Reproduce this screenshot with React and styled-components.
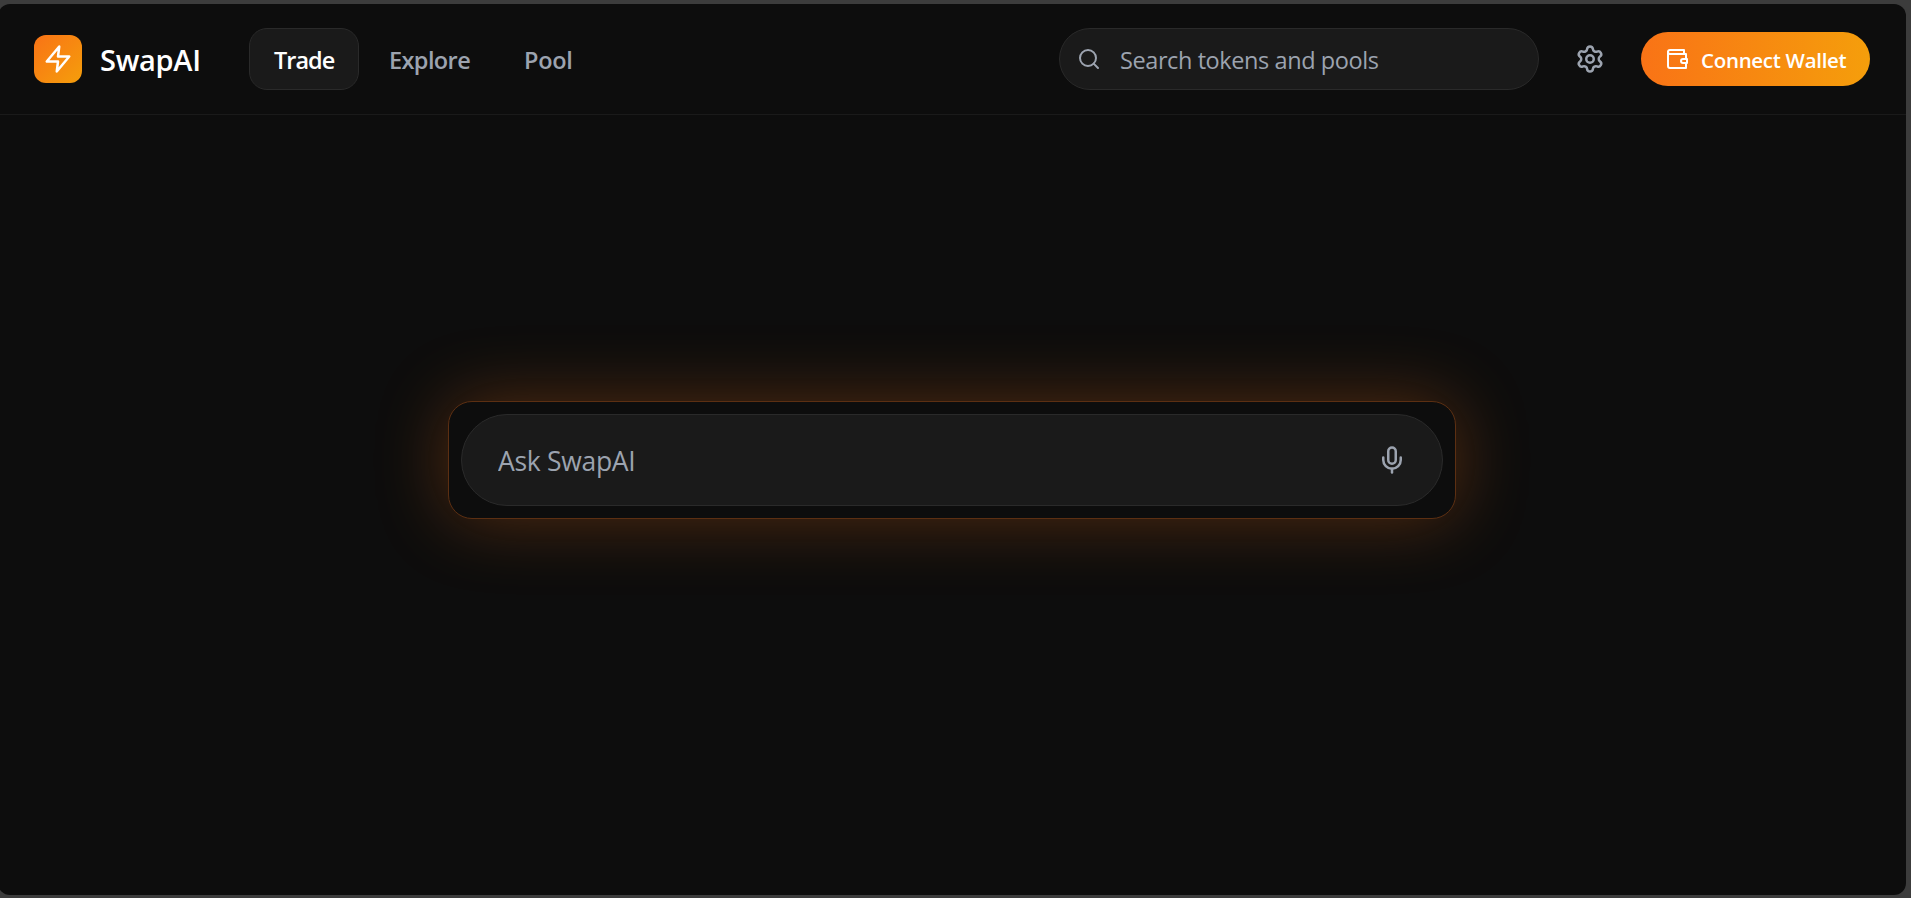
import React from "react";
import styled, { createGlobalStyle } from "styled-components";
import { Search, Settings, Mic } from "lucide-react";

const GlobalStyle = createGlobalStyle`
  *, *::before, *::after { box-sizing: border-box; }
  html, body { margin: 0; height: 100%; overflow: hidden; }
  body {
    background: #3c3c3c;
    color: #fff;
    font-family: "Segoe UI", "Open Sans", "Noto Sans", sans-serif;
  }
  button, input { font: inherit; color: inherit; }
`;

const Window = styled.div`
  display: flex;
  flex-direction: column;
  width: 1908px;
  height: 891px;
  margin: 4px 0 0 -2px;
  border-radius: 12px;
  background: #0d0d0d;
  overflow: hidden;
`;

const Header = styled.header`
  display: flex;
  align-items: center;
  height: 111px;
  padding: 0 36px;
  border-bottom: 1px solid #1a1a1a;
`;

const LogoMark = styled.div`
  display: grid;
  place-items: center;
  width: 48px;
  height: 48px;
  border-radius: 12px;
  background: linear-gradient(135deg, #f97316, #f59e0b);
`;

const LineIcon = styled.svg`
  width: ${(p) => p.$size}px;
  height: ${(p) => p.$size}px;
  fill: none;
  stroke: currentColor;
  stroke-width: 2;
  stroke-linecap: round;
  stroke-linejoin: round;
`;

const Brand = styled.span`
  width: 100px;
  margin: 1px 0 0 18px;
  font-size: 29px;
  line-height: 42px;
  font-weight: 600;
  letter-spacing: -0.3px;
  white-space: nowrap;
`;

const Nav = styled.nav`
  display: flex;
  gap: 6px;
  margin-left: 49px;
`;

const NavItem = styled.button`
  width: ${(p) => p.$width}px;
  height: 62px;
  padding: 2px 0 0 ${(p) => (p.$active ? 24 : 23)}px;
  border: 1px solid ${(p) => (p.$active ? "#2a2a2a" : "transparent")};
  border-radius: 18px;
  background: ${(p) => (p.$active ? "#1a1a1a" : "transparent")};
  color: ${(p) => (p.$active ? "#fff" : "#9ca3af")};
  font-size: 23.5px;
  font-weight: 600;
  letter-spacing: ${(p) => p.$tracking}px;
  text-align: left;
  white-space: nowrap;
`;

const Actions = styled.div`
  display: flex;
  align-items: center;
  margin-left: auto;
`;

const SearchBox = styled.label`
  display: flex;
  align-items: center;
  gap: 19px;
  width: 480px;
  height: 62px;
  padding-left: 17px;
  border: 1px solid #2a2a2a;
  border-radius: 31px;
  background: #1a1a1a;
  color: #9ca3af;
`;

const TextInput = styled.input`
  flex: 1;
  min-width: 0;
  padding: ${(p) => p.$drop}px 0 0;
  border: 0;
  outline: 0;
  background: transparent;
  font-size: ${(p) => p.$size}px;
  letter-spacing: ${(p) => p.$tracking}px;
  &::placeholder { color: #9ca3af; opacity: 1; }
`;

const IconButton = styled.button`
  display: grid;
  place-items: center;
  width: 54px;
  height: 54px;
  padding: 0;
  border: 0;
  background: transparent;
  color: #9ca3af;
`;

const SettingsButton = styled(IconButton)`
  margin: 0 24px;
`;

const ConnectButton = styled.button`
  display: flex;
  align-items: center;
  gap: 12px;
  width: 229px;
  height: 54px;
  padding: 0 0 0 24px;
  border: 0;
  border-radius: 27px;
  background: linear-gradient(90deg, #f97316, #f59e0b);
  color: #fff;
  font-size: 20.5px;
  font-weight: 600;
  letter-spacing: -0.3px;
  white-space: nowrap;
`;

const ConnectLabel = styled.span`
  padding-top: 2px;
`;

const Main = styled.main`
  display: flex;
  justify-content: center;
  align-items: flex-start;
  flex: 1;
  padding-top: 286px;
`;

const Glow = styled.section`
  width: 1008px;
  height: 118px;
  padding: 12px;
  border: 1px solid #5c2f12;
  border-radius: 24px;
  background: #0d0d0d;
  box-shadow: 0 0 72px rgba(249, 115, 22, 0.3);
`;

const Prompt = styled.label`
  display: flex;
  align-items: center;
  height: 92px;
  padding: 0 23px 0 36px;
  border: 1px solid #2a2a2a;
  border-radius: 46px;
  background: #1a1a1a;
`;

const BoltIcon = () => (
  <LineIcon $size={30} viewBox="0 0 24 24">
    <polygon points="13 2 3 14 12 14 11 22 21 10 12 10 13 2" />
  </LineIcon>
);

const WalletIcon = () => (
  <LineIcon $size={24} viewBox="0 0 24 24">
    <path d="M21 12V7H5a2 2 0 0 1 0-4h14v4" />
    <path d="M3 5v14a2 2 0 0 0 2 2h16v-5" />
    <path d="M18 12a2 2 0 0 0 0 4h4v-4Z" />
  </LineIcon>
);

export default function App() {
  return (
    <>
      <GlobalStyle />
      <Window>
        <Header>
          <LogoMark><BoltIcon /></LogoMark>
          <Brand>SwapAI</Brand>
          <Nav>
            <NavItem $active $width={110} $tracking={-1}>Trade</NavItem>
            <NavItem $width={129} $tracking={-0.6}>Explore</NavItem>
            <NavItem $width={96} $tracking={-0.3}>Pool</NavItem>
          </Nav>
          <Actions>
            <SearchBox>
              <Search size={24} />
              <TextInput placeholder="Search tokens and pools" $size={23.5} $tracking={-0.41} $drop={2} />
            </SearchBox>
            <SettingsButton aria-label="Settings"><Settings size={30} /></SettingsButton>
            <ConnectButton>
              <WalletIcon />
              <ConnectLabel>Connect Wallet</ConnectLabel>
            </ConnectButton>
          </Actions>
        </Header>
        <Main>
          <Glow>
            <Prompt>
              <TextInput placeholder="Ask SwapAI" $size={26.5} $tracking={-0.3} $drop={1} />
              <IconButton aria-label="Voice input"><Mic size={30} /></IconButton>
            </Prompt>
          </Glow>
        </Main>
      </Window>
    </>
  );
}
